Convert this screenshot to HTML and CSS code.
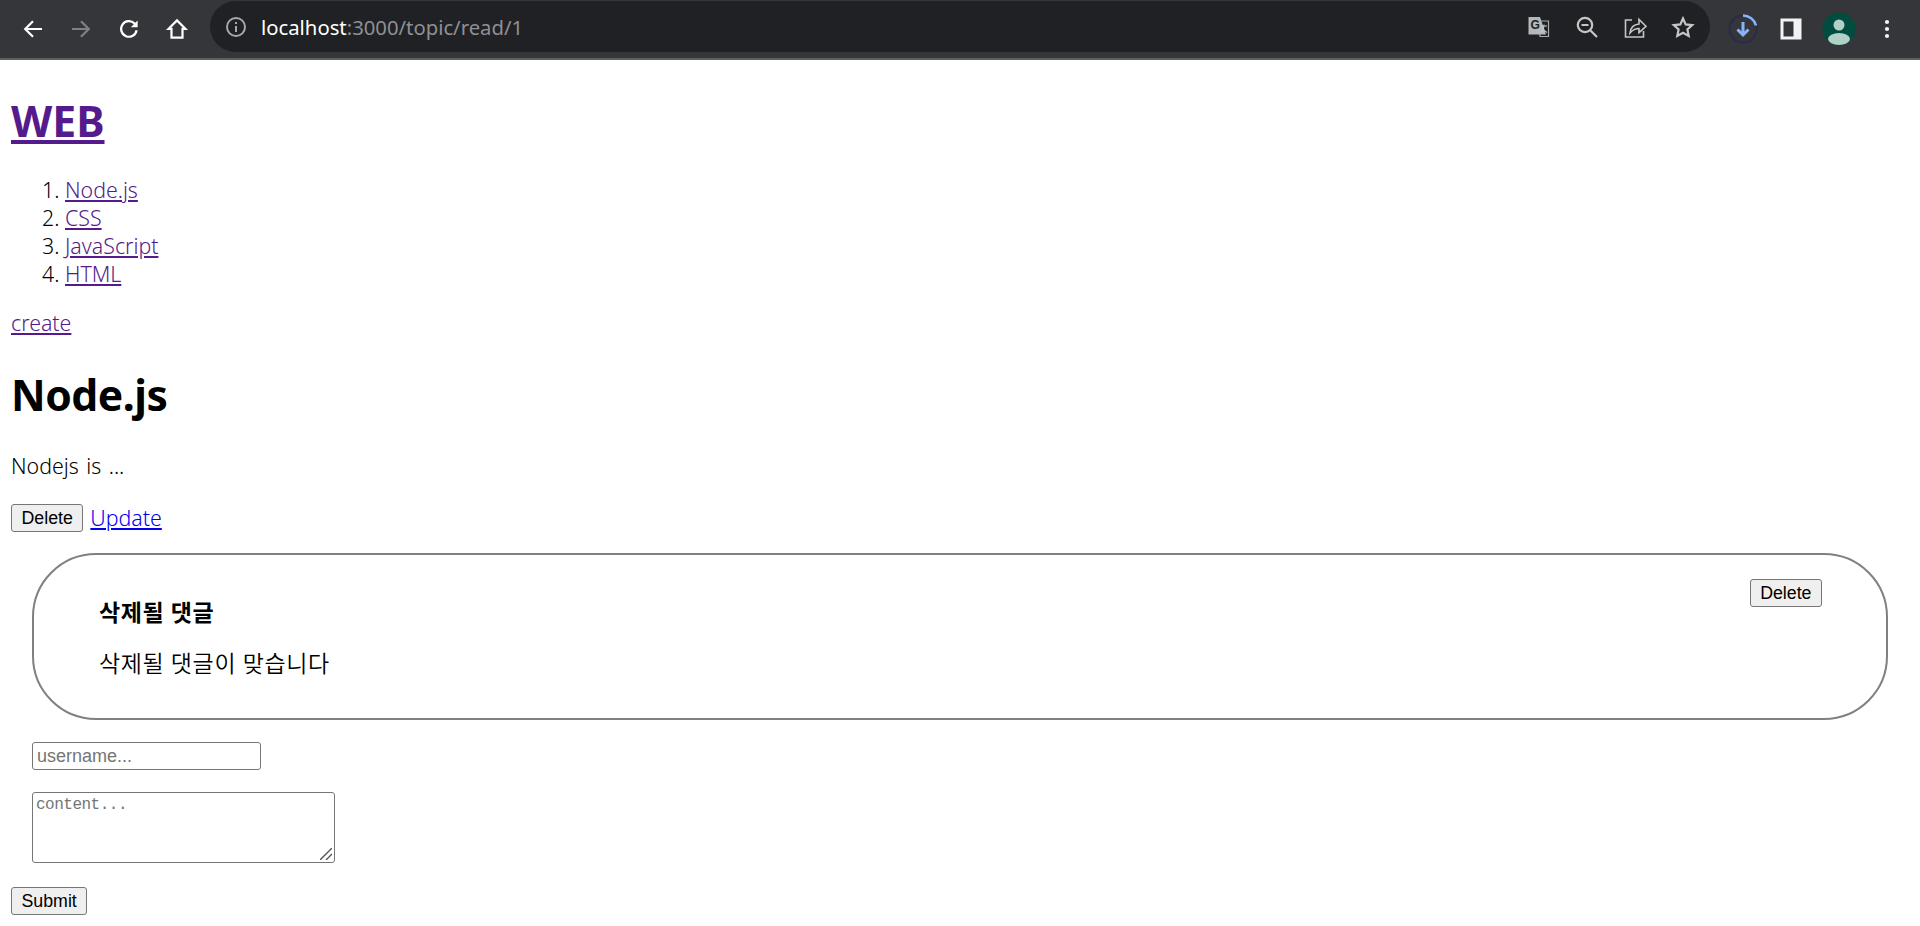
FILE: index.html
```html
<!DOCTYPE html>
<html lang="ko">

<head>
    <meta charset="UTF-8" />
    <meta name="viewport" content="width=device-width, initial-scale=1.0" />
    <title>WEB</title>
    <link rel="stylesheet" href="styles.css">
</head>

<body>
    <div class="toolbar">
        <div class="icon-btn">
            <svg viewBox="0 0 24 24" class="stroke"><path d="M21 12H4.500M12 4.200 4.200 12l7.800 7.800" /></svg>
        </div>
        <div class="icon-btn dim">
            <svg viewBox="0 0 24 24" class="stroke"><path d="M3 12h16.500M12 4.200l7.800 7.800-7.800 7.800" /></svg>
        </div>
        <div class="icon-btn">
            <svg viewBox="0 0 24 24" class="stroke"><path d="M19.600 13.200a7.800 7.800 0 1 1-2-6.600l1.600 1.800" /><path class="fill" d="M20.600 3.400v6.800h-6.800z" /></svg>
        </div>
        <div class="icon-btn">
            <svg viewBox="0 0 24 24" class="stroke"><path d="M12 3.400 3.600 11.800h2.900v8.800h11v-8.800h2.900z" /></svg>
        </div>

        <div class="omnibox">
            <svg class="info" viewBox="0 0 24 24"><circle cx="12" cy="12" r="9" /><path d="M12 11v6M12 7v2" /></svg>
            <div class="url"><span class="host">localhost</span>:3000/topic/read/1</div>
            <div class="omni-actions">
                <div class="icon-btn grey">
                    <svg viewBox="0 0 24 24">
                        <path class="doc-back" d="M11 6h10.500v15.500H13z" />
                        <path class="doc-front" d="M1.500 2h11.500l6 17.500H1.500z" />
                        <text x="3.600" y="14" class="g-mark">G</text>
                        <path class="x-mark" d="M14 11h6M17 9.500c0 4-1 6-3 7.500M15 12c1 2.500 3 4.500 5 5.500" />
                    </svg>
                </div>
                <div class="icon-btn grey">
                    <svg viewBox="0 0 24 24" class="stroke"><circle cx="10" cy="10" r="7.200" /><path d="M6.500 10h7M15.500 15.500l6.500 6.500" /></svg>
                </div>
                <div class="icon-btn grey">
                    <svg viewBox="0 0 24 24" class="thin"><path d="M9 5H2.500v17h18v-6" /><path d="M7 18c.5-5 3.500-8.500 9-9V4.500l7 6.800-7 6.300V13.500c-4 0-6.500 1.500-9 4.500z" /></svg>
                </div>
                <div class="icon-btn grey">
                    <svg viewBox="0 0 24 24" class="stroke"><path d="M12 3.500l2.700 5.900 6.500.7-4.800 4.400 1.300 6.400-5.700-3.200-5.700 3.200 1.300-6.400-4.800-4.400 6.500-.7z" /></svg>
                </div>
            </div>
        </div>

        <div class="icon-btn">
            <svg viewBox="0 0 32 32" class="download">
                <circle class="ring" cx="16" cy="16" r="13.500" />
                <path class="progress" d="M16 2.500A13.500 13.500 0 0 1 29 12.500" />
                <path class="arrow" d="M16 9v13M10.500 16.500 16 22l5.500-5.500" />
            </svg>
        </div>
        <div class="icon-btn">
            <svg viewBox="0 0 24 24"><path class="panel" fill-rule="evenodd" d="M1.500 1.500h21v21h-21zM4.500 4.500v15h10v-15z" /></svg>
        </div>
        <div class="icon-btn">
            <svg viewBox="0 0 34 34" class="avatar">
                <circle class="avatar-bg" cx="17" cy="17" r="16.500" />
                <circle class="avatar-fg" cx="17" cy="13" r="5.500" />
                <ellipse class="avatar-fg" cx="17" cy="27" rx="11" ry="6" />
            </svg>
        </div>
        <div class="icon-btn">
            <svg viewBox="0 0 24 24"><circle class="dot" cx="12" cy="5" r="2.100" /><circle class="dot" cx="12" cy="12" r="2.100" /><circle class="dot" cx="12" cy="19" r="2.100" /></svg>
        </div>
    </div>

    <div class="page">
        <h1><a href="#">WEB</a></h1>
        <ol>
            <li><a href="#">Node.js</a></li>
            <li><a href="#">CSS</a></li>
            <li><a href="#">JavaScript</a></li>
            <li><a href="#">HTML</a></li>
        </ol>
        <a href="#" class="create">create</a>

        <h2>Node.js</h2>
        <p class="desc">Nodejs is ...</p>

        <div class="actions">
            <button>Delete</button>
            <a href="#" class="update">Update</a>
        </div>

        <div class="comment">
            <button class="comment-delete">Delete</button>
            <h4>삭제될 댓글</h4>
            <p>삭제될 댓글이 맞습니다</p>
        </div>

        <form>
            <input type="text" class="username" placeholder="username..." />
            <div class="content-wrap">
                <textarea class="content" placeholder="content..."></textarea>
                <svg class="grip" viewBox="0 0 12 12"><path d="M0 12 12 0M6 12l6-6" /></svg>
            </div>
            <button type="button">Submit</button>
        </form>
    </div>
</body>

</html>
```

FILE: styles.css
```css
html,
body {
    margin: 0;
    height: 926px;
    overflow: hidden;
    background: #fff;
}

body {
    font-family: "Noto Sans", "Noto Sans CJK KR", sans-serif;
    font-size: 21.33px;
    font-weight: 350;
    line-height: 28px;
    color: #000;
}

/* browser chrome */
.toolbar {
    display: flex;
    align-items: center;
    height: 58px;
    padding: 0 9px;
    background: #35363a;
    border-bottom: 2px solid #5f6064;
}

.icon-btn {
    width: 48px;
    height: 48px;
    flex: none;
    display: flex;
    align-items: center;
    justify-content: center;
}

.icon-btn svg {
    width: 24px;
    height: 24px;
    color: #fff;
}

.icon-btn.dim svg {
    color: #7f8083;
}

.icon-btn.grey svg {
    color: #c4c7c5;
}

.stroke,
.thin {
    fill: none;
    stroke: currentColor;
    stroke-width: 2.2;
}

.thin {
    stroke-width: 1.6;
}

.stroke .fill {
    fill: currentColor;
    stroke: none;
}

.omnibox {
    flex: 1;
    display: flex;
    align-items: center;
    height: 51px;
    margin: -5px 9px 0 9px;
    padding: 0 3px 0 14px;
    background: #202124;
    border-radius: 26px;
}

.info {
    width: 24px;
    height: 24px;
    flex: none;
    fill: none;
    stroke: #a5a7aa;
    stroke-width: 2;
}

.url {
    flex: 1;
    margin-left: 13px;
    font-size: 20.3px;
    font-weight: 400;
    color: #8e9094;
}

.host {
    color: #fff;
}

.omni-actions {
    display: flex;
}

.doc-back {
    fill: none;
    stroke: #a8aaad;
    stroke-width: 1.2;
}

.doc-front {
    fill: #b5b7ba;
}

.g-mark {
    font-family: "Liberation Sans", sans-serif;
    font-size: 12px;
    font-weight: bold;
    fill: #202124;
}

.x-mark {
    fill: none;
    stroke: #c4c7c5;
    stroke-width: 1.1;
}

.download {
    fill: none;
}

.icon-btn svg.download {
    width: 32px;
    height: 32px;
}

.ring {
    stroke: #2c2d45;
    stroke-width: 2.5;
}

.progress {
    stroke: #8ab4f8;
    stroke-width: 2.5;
}

.arrow {
    stroke: #8ab4f8;
    stroke-width: 3;
}

.panel {
    fill: #f1f3f4;
}

.icon-btn svg.avatar {
    width: 34px;
    height: 34px;
}

.avatar-bg {
    fill: #004d40;
}

.avatar-fg {
    fill: #b2cfc8;
}

.dot {
    fill: #f1f3f4;
}

/* page content */
.page {
    padding: 0 11px;
}

a {
    color: #551a8b;
}

h1 {
    margin: 32px 0 27px;
    font-size: 42.67px;
    font-weight: 700;
    line-height: 57px;
}

ol {
    margin: 0 0 21px;
    padding-left: 54px;
}

.create {
    display: block;
}

h2 {
    margin: 29px 0 0;
    font-size: 42.67px;
    font-weight: 700;
    line-height: 57px;
    letter-spacing: -0.5px;
}

.desc {
    margin: 29px 0 24px;
    word-spacing: 2px;
}

.actions {
    display: flex;
    align-items: center;
    gap: 7px;
}

.update {
    color: #0000ee;
}

button {
    height: 28px;
    padding: 0 9.5px;
    font-family: "Liberation Sans", sans-serif;
    font-size: 17.78px;
    color: #000;
    background: #efefef;
    border: 1px solid #767676;
    border-radius: 3px;
}

.comment {
    height: 167px;
    box-sizing: border-box;
    margin: 21px 21px 0;
    padding: 24px 64px 0 65px;
    border: 2px solid #808080;
    border-radius: 64px;
    font-size: 23px;
    letter-spacing: 0.6px;
}

.comment-delete {
    float: right;
    letter-spacing: 0;
}

h4 {
    margin: 0;
    padding-top: 19px;
    font-size: 23px;
    font-weight: 700;
    line-height: 28px;
}

.comment p {
    margin: 23px 0 0;
}

form {
    margin-top: 22px;
}

input,
textarea {
    display: block;
    box-sizing: border-box;
    background: #fff;
    border: 1px solid #767676;
    border-radius: 3px;
}

.username {
    width: 229px;
    height: 28px;
    margin-left: 21px;
    padding: 1px 4px;
    font-family: "Liberation Sans", sans-serif;
    font-size: 18px;
}

.content-wrap {
    position: relative;
    width: 303px;
    height: 71px;
    margin: 22px 0 0 21px;
}

.content {
    width: 100%;
    height: 100%;
    padding: 3px;
    resize: none;
    font-family: "Liberation Mono", monospace;
    font-size: 16px;
    letter-spacing: -0.5px;
}

.grip {
    position: absolute;
    right: 3px;
    bottom: 3px;
    width: 12px;
    height: 12px;
    fill: none;
    stroke: #555;
    stroke-width: 1.4;
}

::placeholder {
    color: #757575;
}

form button {
    display: block;
    margin-top: 24px;
}
```
